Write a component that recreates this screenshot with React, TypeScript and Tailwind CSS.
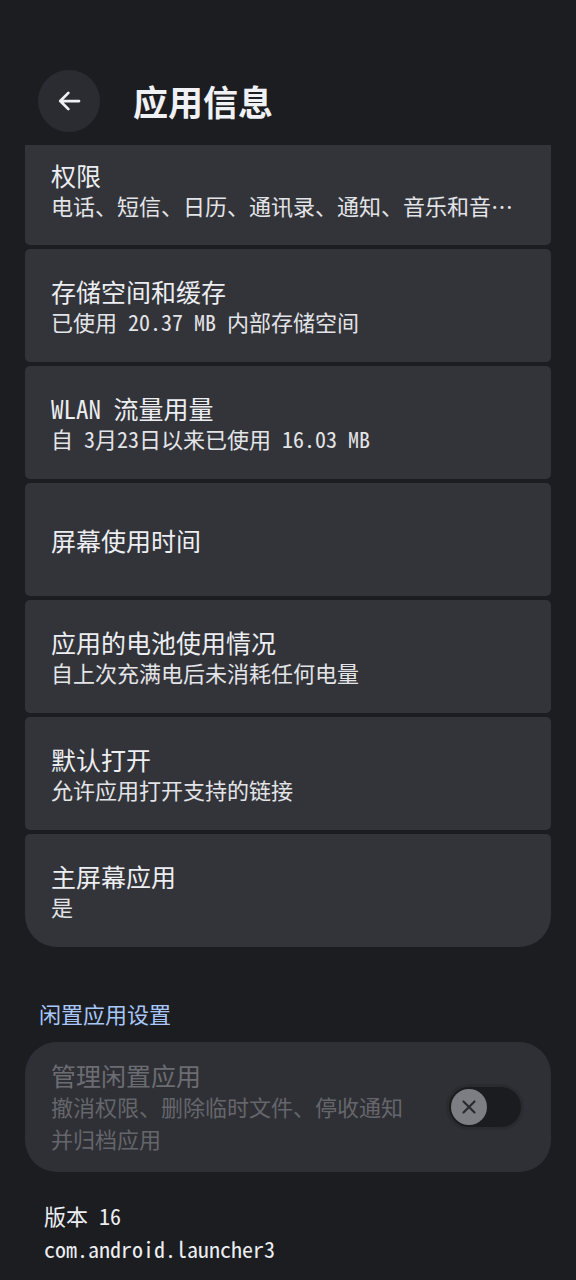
import React from "react";

const FONT = '"Noto Sans Mono CJK SC", "DejaVu Sans Mono", "Noto Sans CJK SC", monospace';

type Item = { title: string; sub?: string };

const items: Item[] = [
  { title: "存储空间和缓存", sub: "已使用 20.37 MB 内部存储空间" },
  { title: "WLAN 流量用量", sub: "自 3月23日以来已使用 16.03 MB" },
  { title: "屏幕使用时间" },
  { title: "应用的电池使用情况", sub: "自上次充满电后未消耗任何电量" },
  { title: "默认打开", sub: "允许应用打开支持的链接" },
];

function Card({ item, last }: { item: Item; last?: boolean }) {
  return (
    <div
      className={
        "h-[113px] bg-[#333439] flex flex-col justify-center px-[26px] " +
        (last ? "rounded-t-[5px] rounded-b-[32px]" : "rounded-[5px]")
      }
    >
      <div className="text-[25px] leading-[30px] font-medium text-[#eceef2]">{item.title}</div>
      {item.sub && (
        <div className="text-[22px] leading-[30px] text-[#e3e4e8] truncate">{item.sub}</div>
      )}
    </div>
  );
}

export default function App() {
  return (
    <div className="min-h-screen w-full bg-[#1c1d21] text-white" style={{ fontFamily: FONT }}>
      {/* Header */}
      <div className="pt-[70px] pl-[38px] flex items-center">
        <div className="w-[62px] h-[62px] rounded-full bg-[#2b2c31] flex items-center justify-center">
          <svg width="30" height="30" viewBox="0 0 24 24" fill="none">
            <path
              d="M20 12H5M11.5 5.5L5 12l6.5 6.5"
              stroke="#eef0f4"
              strokeWidth="2.2"
              strokeLinecap="round"
              strokeLinejoin="round"
            />
          </svg>
        </div>
        <div className="ml-[33px] text-[35px] leading-[44px] font-semibold text-[#f0f1f5]">应用信息</div>
      </div>

      {/* Cards */}
      <div className="mt-[13px] px-[25px] flex flex-col gap-[4px]">
        <div className="h-[100px] bg-[#333439] rounded-b-[5px] flex flex-col justify-center px-[26px] pb-[10px]">
          <div className="text-[25px] leading-[30px] font-medium text-[#eceef2]">权限</div>
          <div className="text-[22px] leading-[30px] text-[#e3e4e8] truncate">
            电话、短信、日历、通讯录、通知、音乐和音频、附近的设备
          </div>
        </div>
        {items.map((it) => (
          <Card key={it.title} item={it} />
        ))}
        <Card item={{ title: "主屏幕应用", sub: "是" }} last />
      </div>

      {/* Section header */}
      <div className="mt-[51px] pl-[39px] text-[22px] leading-[30px] font-medium text-[#a8c7fa]">
        闲置应用设置
      </div>

      {/* Switch card */}
      <div className="mt-[14px] mx-[25px] h-[130px] rounded-[32px] bg-[#2f3035] flex items-center justify-between pl-[26px] pr-[27px]">
        <div className="w-[362px]">
          <div className="text-[25px] leading-[30px] font-medium text-[#6c6d72]">管理闲置应用</div>
          <div className="text-[22px] leading-[32px] text-[#65666b]">
            撤消权限、删除临时文件、停收通知并归档应用
          </div>
        </div>
        <div className="w-[78px] h-[46px] rounded-full bg-[#1b1c20] border-[3px] border-[#2a2b2f] flex items-center pl-[2px]">
          <div className="w-[36px] h-[36px] rounded-full bg-[#7d7e83] flex items-center justify-center">
            <svg width="24" height="24" viewBox="0 0 24 24" fill="none">
              <path d="M6.5 6.5l11 11M17.5 6.5l-11 11" stroke="#2a2b30" strokeWidth="2.2" strokeLinecap="round" />
            </svg>
          </div>
        </div>
      </div>

      {/* Version */}
      <div className="mt-[27px] pl-[44px] pb-[20px]">
        <div className="text-[22px] leading-[33px] font-medium text-[#eceef2]">版本 16</div>
        <div className="text-[22px] leading-[33px] text-[#eceef2]">com.android.launcher3</div>
      </div>
    </div>
  );
}
